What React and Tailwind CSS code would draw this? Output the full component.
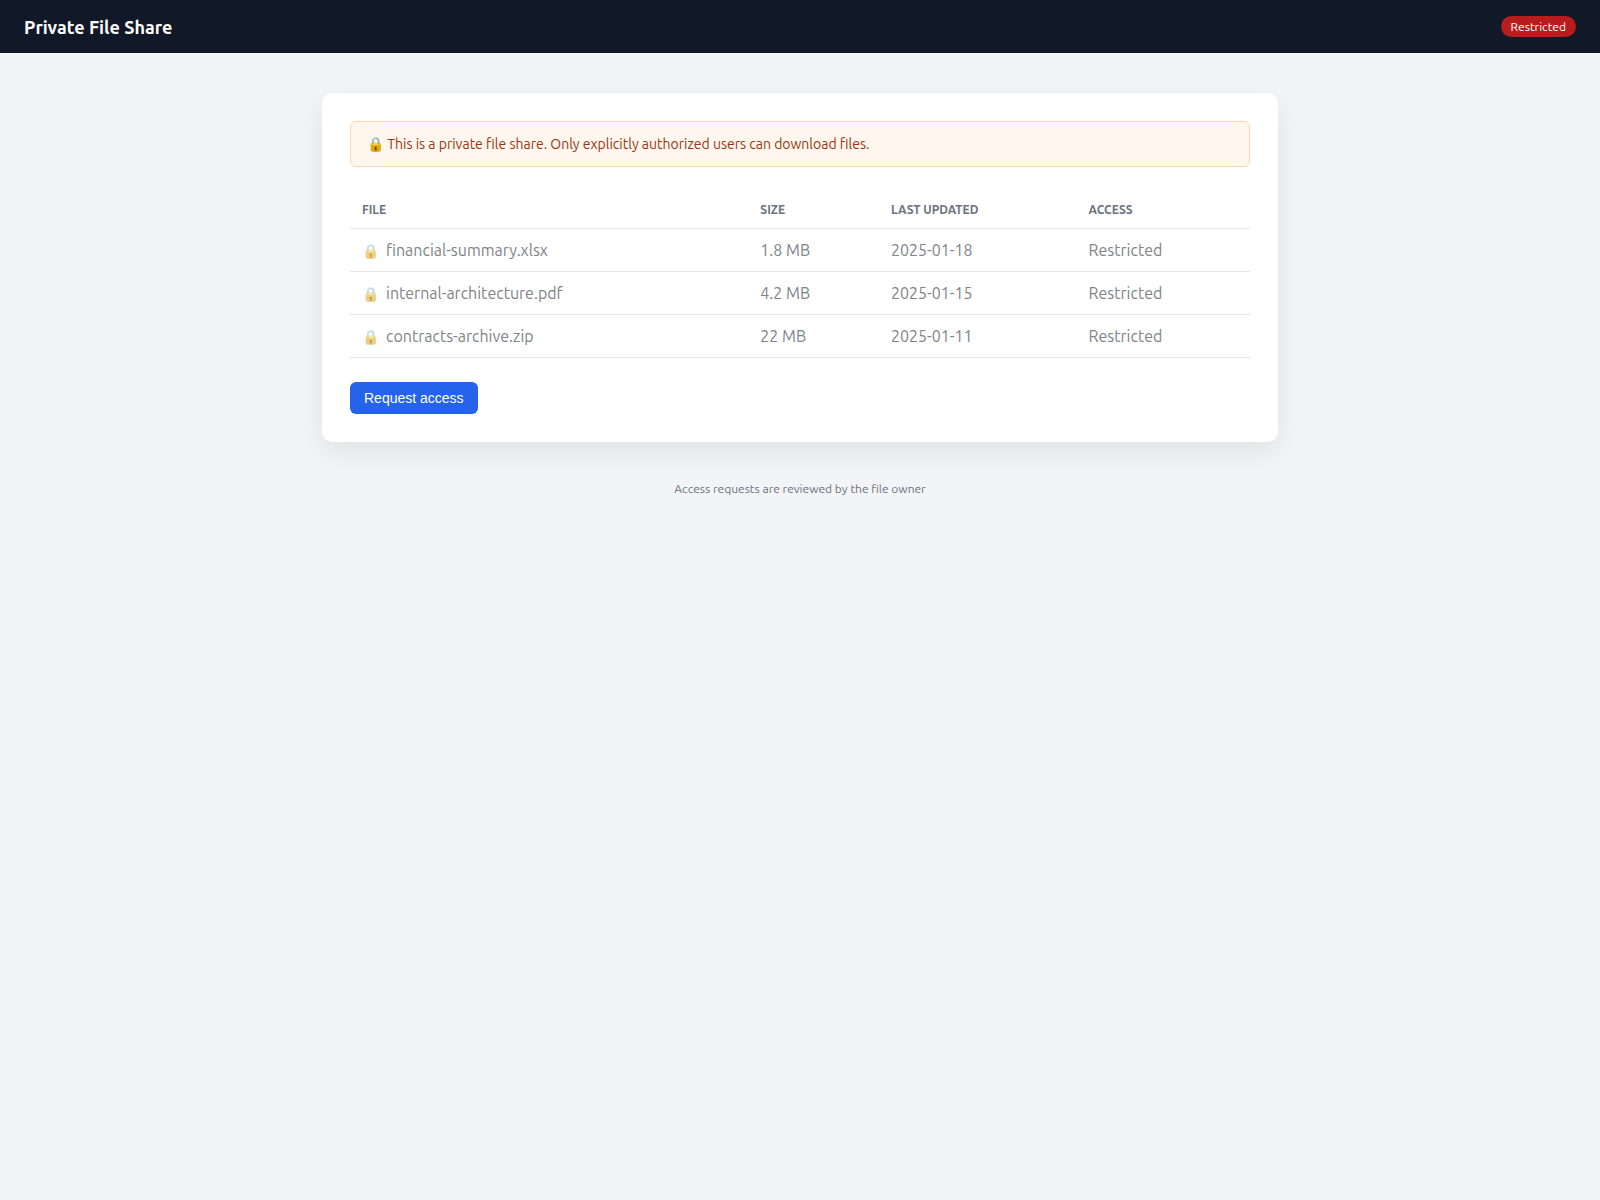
const files = [
  { name: 'financial-summary.xlsx', size: '1.8 MB', updated: '2025-01-18', access: 'Restricted' },
  { name: 'internal-architecture.pdf', size: '4.2 MB', updated: '2025-01-15', access: 'Restricted' },
  { name: 'contracts-archive.zip', size: '22 MB', updated: '2025-01-11', access: 'Restricted' },
];

function Header() {
  return (
    <header className="flex items-center justify-between bg-[#111827] px-6 py-4 text-white">
      <h1 className="text-[18px] leading-5 font-bold">Private File Share</h1>
      <span className="rounded-full bg-[#b91c1c] px-[10px] py-1 text-[12px] leading-[13px] text-white">
        Restricted
      </span>
    </header>
  );
}

function Notice() {
  return (
    <div className="rounded-md border border-[#fed7aa] bg-[#fff7ed] px-4 py-[14px] text-[14px] leading-4 text-[#9a3412]">
      🔒 This is a private file share. Only explicitly authorized users can download files.
    </div>
  );
}

function FileTable() {
  return (
    <table className="mt-6 w-full border-collapse text-left">
      <thead>
        <tr className="border-b border-[#e5e7eb] text-[12px] leading-[13px] text-[#6b7280] uppercase">
          <th className="p-3 font-bold">File</th>
          <th className="p-3 font-bold">Size</th>
          <th className="p-3 font-bold">Last updated</th>
          <th className="p-3 font-bold">Access</th>
        </tr>
      </thead>
      <tbody>
        {files.map((file) => (
          <tr key={file.name} className="border-b border-[#e5e7eb] text-[16px] leading-[18px] text-[#808388]">
            <td className="p-3">
              <span className="mr-[7px] text-[14px] leading-4 opacity-55">🔒</span>
              {file.name}
            </td>
            <td className="p-3">{file.size}</td>
            <td className="p-3">{file.updated}</td>
            <td className="p-3">{file.access}</td>
          </tr>
        ))}
      </tbody>
    </table>
  );
}

export default function App() {
  return (
    <div className="min-h-screen bg-[#f3f4f6] font-['Ubuntu','Roboto',sans-serif] text-[#111827]">
      <Header />
      <main className="mx-auto mt-10 max-w-[956px] rounded-[10px] bg-white p-7 shadow-[0_10px_30px_rgba(0,0,0,0.08)]">
        <Notice />
        <FileTable />
        <button
          type="button"
          className="mt-6 block rounded-md bg-[#2563eb] px-[14px] py-2 font-['Liberation_Sans',sans-serif] text-[14px] leading-4 text-white"
        >
          Request access
        </button>
      </main>
      <footer className="mt-10 text-center text-[12px] leading-[14px] text-[#6b7280]">
        Access requests are reviewed by the file owner
      </footer>
    </div>
  );
}
